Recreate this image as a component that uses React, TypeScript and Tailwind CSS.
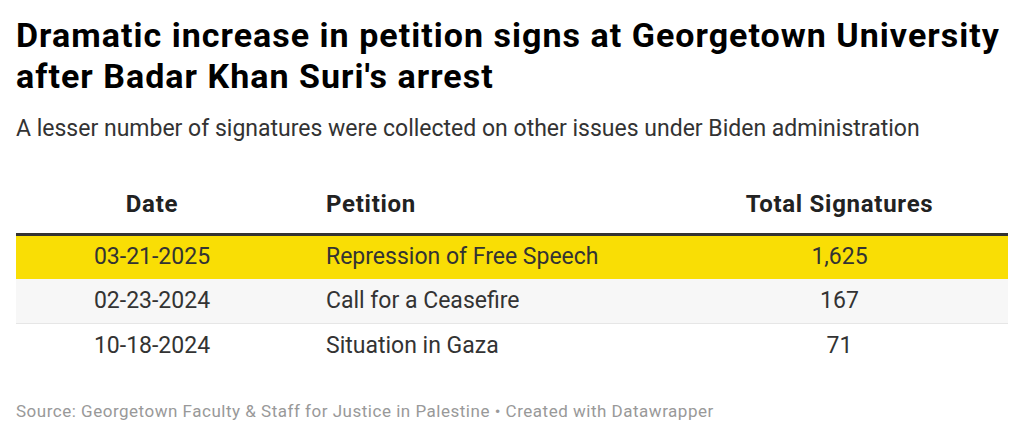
const rows = [
  { date: "03-21-2025", petition: "Repression of Free Speech", total: "1,625", cls: "h-[43px] bg-[#f9de05]" },
  { date: "02-23-2024", petition: "Call for a Ceasefire", total: "167", cls: "h-[45px] bg-[#f7f7f7] border-b border-[#e6e6e6]" },
  { date: "10-18-2024", petition: "Situation in Gaza", total: "71", cls: "h-[44px] bg-white" },
];

export default function App() {
  return (
    <div className="w-[1024px] h-[439px] bg-white px-4 pt-[15px] font-['Roboto',sans-serif] text-[#333]">
      <h1 className="text-[34px] leading-[41px] font-bold tracking-[0.03em] text-black">
        Dramatic increase in petition signs at Georgetown University
        <br />
        after Badar Khan Suri's arrest
      </h1>
      <p className="mt-[17px] text-[23px] leading-[30px] text-[#333]">
        A lesser number of signatures were collected on other issues under Biden administration
      </p>

      <div className="mt-[47px] w-[992px]">
        <div className="grid grid-cols-[272px_383px_1fr] pb-[15px] leading-[27px] text-[24px] font-bold tracking-[0.03em] text-[#222] border-b-[3px] border-[#333]">
          <div className="text-center">Date</div>
          <div className="pl-[38px]">Petition</div>
          <div className="text-center">Total Signatures</div>
        </div>
        {rows.map((r) => (
          <div
            key={r.date}
            className={`grid grid-cols-[272px_383px_1fr] items-center text-[23px] ${r.cls}`}
          >
            <div className="text-center">{r.date}</div>
            <div className="pl-[38px]">{r.petition}</div>
            <div className="text-center">{r.total}</div>
          </div>
        ))}
      </div>

      <p className="mt-[31px] text-[17px] tracking-[0.03em] text-[#999]">
        Source: Georgetown Faculty &amp; Staff for Justice in Palestine • Created with Datawrapper
      </p>
    </div>
  );
}
